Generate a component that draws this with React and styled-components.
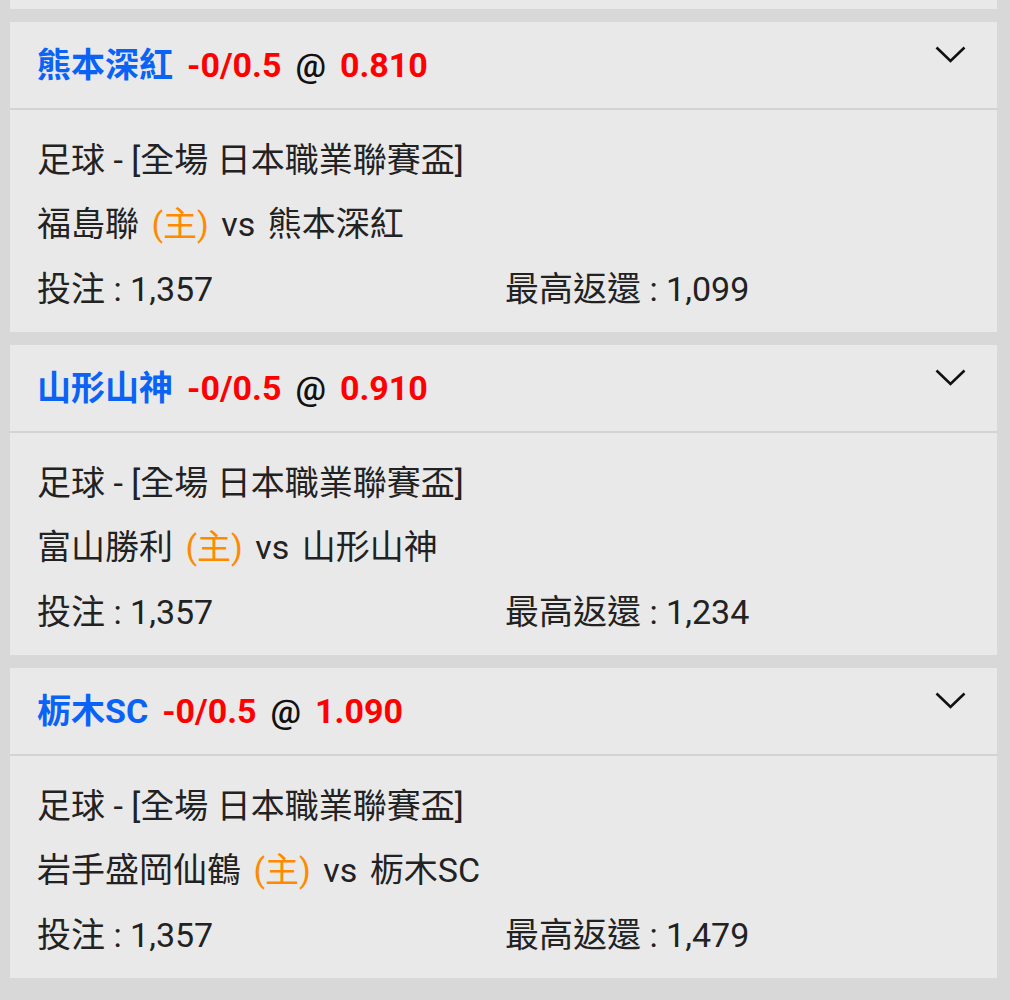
import React from 'react'
import styled, { createGlobalStyle } from 'styled-components'

const GlobalStyle = createGlobalStyle`
    html, body {
        margin: 0;
        padding: 0;
        background: #d8d8d8;
    }
    body {
        font-family: Roboto, "Noto Sans CJK TC", "Noto Sans", sans-serif;
        color: #222;
    }
`

///Styled Components

const Page = styled.div`
    width: 1010px;
    height: 1000px;
    overflow: hidden;
    display: flex;
    flex-direction: column;
    gap: 13px;
`

const PrevCard = styled.div`
    margin: 0 13px 0 10px;
    height: 9px;
    background: #e9e9e9;
`

const Card = styled.div`
    margin: 0 13px 0 10px;
    height: 310px;
    background: #e9e9e9;
    display: flex;
    flex-direction: column;
`

const Header = styled.div`
    height: 86px;
    padding: 0 27px;
    display: flex;
    align-items: center;
    justify-content: space-between;
    border-bottom: 2px solid #d3d3d3;
    font-size: 34px;
    font-weight: 700;
`

const Title = styled.div`
    display: flex;
    align-items: center;
    gap: 14px;
    line-height: 1;
`

const Team = styled.span`
    color: #0b63f6;
`

const Odds = styled.span`
    color: #ff0000;
`

const At = styled.span`
    color: #111;
    font-weight: 500;
`

const Chevron = styled.svg`
    width: 31px;
    height: 17px;
    margin-right: 4px;
    margin-top: -22px;
`

const Body = styled.div`
    flex: 1;
    padding: 15px 27px 0;
    display: flex;
    flex-direction: column;
    font-size: 34px;
`

const Line = styled.div`
    height: 64px;
    display: flex;
    align-items: center;
    white-space: pre;
    word-spacing: ${(p) => (p.$wide ? '4px' : '0')};
`

const Stats = styled.div`
    height: 66px;
    display: grid;
    grid-template-columns: 468px auto;
    align-items: center;
`

const Home = styled.span`
    color: #ff8a00;
`
///End of Styled Components

const bets = [
    { team: '熊本深紅', odds: '0.810', home: '福島聯', away: '熊本深紅', ret: '1,099' },
    { team: '山形山神', odds: '0.910', home: '富山勝利', away: '山形山神', ret: '1,234' },
    { team: '栃木SC', odds: '1.090', home: '岩手盛岡仙鶴', away: '栃木SC', ret: '1,479' }
]

const BetCard = ({ bet }) => (
    <Card>
        <Header>
            <Title>
                <Team>{bet.team}</Team>
                <Odds>-0/0.5</Odds>
                <At>@</At>
                <Odds>{bet.odds}</Odds>
            </Title>
            <Chevron viewBox="0 0 31 17">
                <path d="M1.5 1.5 L15.5 15 L29.5 1.5" fill="none" stroke="#111" strokeWidth="2.6" />
            </Chevron>
        </Header>
        <Body>
            <Line>足球 - [全場 日本職業聯賽盃]</Line>
            <Line $wide>{bet.home} <Home>(主)</Home> vs {bet.away}</Line>
            <Stats>
                <span>投注 : 1,357</span>
                <span>最高返還 : {bet.ret}</span>
            </Stats>
        </Body>
    </Card>
)

export default function App() {
    return (
        <Page>
            <GlobalStyle />
            <PrevCard />
            {bets.map((bet) => (
                <BetCard key={bet.team} bet={bet} />
            ))}
        </Page>
    )
}
